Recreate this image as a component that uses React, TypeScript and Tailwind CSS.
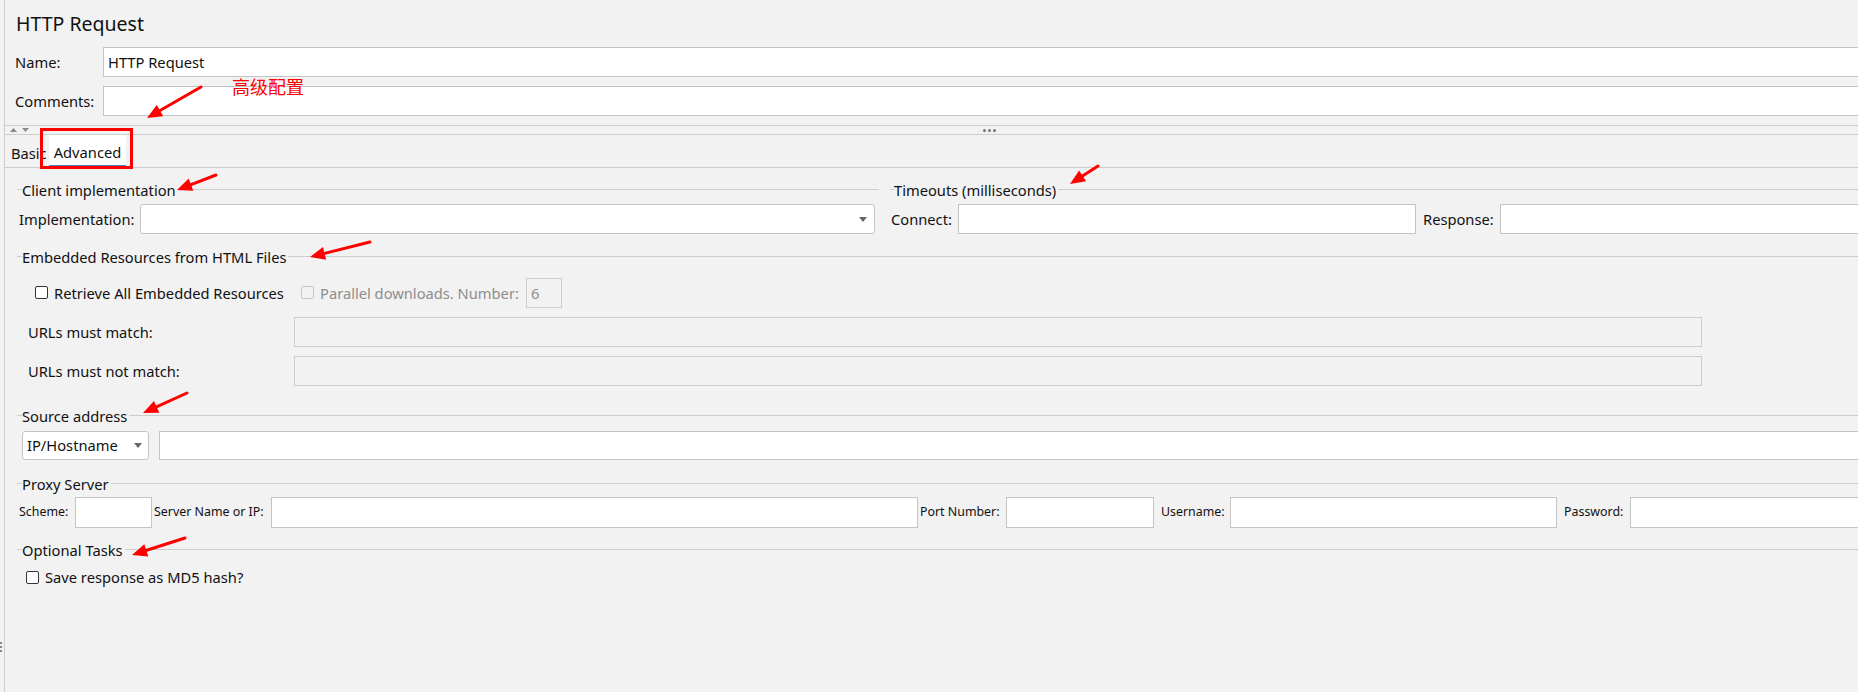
import React from 'react';

// JMeter "HTTP Request" sampler, Advanced tab, with red review annotations.

const LINE = 'bg-[#cdcdcd]';

const Header: React.FC<{ title: string; tick?: string }> = ({ title, tick = 'w-[5px]' }) => (
  <div className="flex items-center h-[20px]">
    <div className={`${tick} h-px ${LINE} shrink-0`} />
    <span className="pt-[2px] pr-[2px] leading-[20px] whitespace-nowrap">{title}</span>
    <div className={`flex-1 h-px ${LINE}`} />
  </div>
);

const Field: React.FC<{ className?: string; value?: string; disabled?: boolean }> = ({
  className = '',
  value,
  disabled,
}) => (
  <div
    className={`h-full border flex items-center pl-[4px] whitespace-nowrap ${
      disabled ? 'bg-[#f2f2f2] border-[#cccccc] text-[#8d8d8d]' : 'bg-white border-[#c4c4c4]'
    } ${className}`}
  >
    {value}
  </div>
);

const Caret: React.FC = () => (
  <svg width="8" height="5" viewBox="0 0 8 5">
    <path d="M0 0 H8 L4 5 Z" fill="#666" />
  </svg>
);

const Check: React.FC<{ disabled?: boolean }> = ({ disabled }) => (
  <span
    className={`w-[13px] h-[13px] shrink-0 border rounded-[2px] ${
      disabled ? 'border-[#c6c6c6] bg-[#f2f2f2]' : 'border-[#333333] bg-white'
    }`}
  />
);

const arrows: [number, number, number, number][] = [
  [201, 87, 147, 118],
  [216, 175, 177, 190],
  [1098, 166, 1070, 184],
  [370, 242, 310, 257],
  [187, 393, 143, 413],
  [185, 538, 132, 555],
];

const Arrow: React.FC<{ a: [number, number, number, number] }> = ({ a }) => {
  const [x1, y1, x2, y2] = a;
  const len = Math.hypot(x2 - x1, y2 - y1);
  const dx = (x2 - x1) / len;
  const dy = (y2 - y1) / len;
  const bx = x2 - dx * 15;
  const by = y2 - dy * 15;
  const px = -dy * 6.5;
  const py = dx * 6.5;
  return (
    <g>
      <line x1={x1} y1={y1} x2={bx + dx * 2} y2={by + dy * 2} stroke="#ff0000" strokeWidth="3" strokeLinecap="round" />
      <polygon points={`${x2},${y2} ${bx + px},${by + py} ${bx - px},${by - py}`} fill="#ff0000" />
    </g>
  );
};

export default function App() {
  return (
    <div className="relative w-[1858px] h-[692px] overflow-hidden bg-[#f2f2f2] text-[#111] text-[14.7px] font-['Noto_Sans',sans-serif]">
      <div className="pl-[4px] h-full">
        <div className="h-full w-[1870px] border-l border-[#cdcdcd]">
          {/* title */}
          <div className="h-[47px] pl-[11px] pt-[10px] text-[19.5px] leading-[28px]">HTTP Request</div>

          <div className="flex items-center h-[30px]">
            <span className="w-[98px] shrink-0 pl-[10px]">Name:</span>
            <Field className="flex-1" value="HTTP Request" />
          </div>
          <div className="flex items-center h-[30px] mt-[9px]">
            <span className="w-[98px] shrink-0 pl-[10px]">Comments:</span>
            <Field className="flex-1" />
          </div>

          {/* splitter */}
          <div className="mt-[9px] h-[10px] border-y border-[#cdcdcd] flex items-center">
            <svg className="ml-[5px]" width="19" height="4" viewBox="0 0 19 4">
              <path d="M0 4 L3.5 0 L7 4 Z" fill="#8a8a8a" />
              <path d="M12 0 H19 L15.5 4 Z" fill="#8a8a8a" />
            </svg>
            <div className="ml-[954px] flex gap-[2px]">
              <span className="w-[3px] h-[3px] rounded-full bg-[#777]" />
              <span className="w-[3px] h-[3px] rounded-full bg-[#777]" />
              <span className="w-[3px] h-[3px] rounded-full bg-[#777]" />
            </div>
          </div>

          {/* tabs */}
          <div className="flex h-[33px] border-b border-[#cdcdcd]">
            <div className="w-[44px] pl-[6px] pt-[5px] flex items-center">Basic</div>
            <div className="w-[77px] h-[32px] bg-white border-b-2 border-[#4a7fc1] pt-[5px] flex items-center justify-center">
              Advanced
            </div>
          </div>

          {/* advanced content */}
          <div className="pl-[12px]">
            <div className="flex mt-[11px]">
              <div className="w-[862px] shrink-0">
                <Header title="Client implementation" />
                <div className="flex items-center h-[30px] mt-[5px]">
                  <span className="w-[123px] shrink-0 pl-[2px]">Implementation:</span>
                  <div className="h-full w-[735px] bg-white border border-[#c4c4c4] rounded-[3px] flex items-center justify-end pr-[7px]">
                    <Caret />
                  </div>
                </div>
              </div>
              <div className="flex-1 ml-[11px]">
                <Header title="Timeouts (milliseconds)" tick="w-[4px]" />
                <div className="flex items-center h-[30px] mt-[5px]">
                  <span className="w-[68px] shrink-0 pl-[1px]">Connect:</span>
                  <Field className="w-[458px]" />
                  <span className="w-[84px] shrink-0 pl-[7px]">Response:</span>
                  <Field className="flex-1" />
                </div>
              </div>
            </div>

            <div className="mt-[12px]">
              <Header title="Embedded Resources from HTML Files" />
            </div>
            <div className="flex items-center h-[30px] mt-[12px]">
              <div className="ml-[18px] w-[266px] flex items-center gap-[6px]">
                <Check />
                <span className="whitespace-nowrap">Retrieve All Embedded Resources</span>
              </div>
              <div className="w-[225px] flex items-center gap-[6px] text-[#8d8d8d]">
                <Check disabled />
                <span className="whitespace-nowrap">Parallel downloads. Number:</span>
              </div>
              <Field className="w-[36px]" value="6" disabled />
            </div>
            <div className="flex items-center h-[30px] mt-[9px]">
              <span className="w-[277px] shrink-0 pl-[11px]">URLs must match:</span>
              <Field className="w-[1408px]" disabled />
            </div>
            <div className="flex items-center h-[30px] mt-[9px]">
              <span className="w-[277px] shrink-0 pl-[11px]">URLs must not match:</span>
              <Field className="w-[1408px]" disabled />
            </div>

            <div className="mt-[19px]">
              <Header title="Source address" />
            </div>
            <div className="flex items-center h-[29px] mt-[6px]">
              <div className="ml-[5px] h-full w-[127px] bg-white border border-[#c4c4c4] rounded-[3px] flex items-center justify-between pl-[4px] pr-[6px]">
                <span>IP/Hostname</span>
                <Caret />
              </div>
              <Field className="flex-1 ml-[10px]" />
            </div>

            <div className="mt-[13px]">
              <Header title="Proxy Server" />
            </div>
            <div className="flex items-center h-[31px] mt-[4px] text-[12.4px]">
              <span className="w-[58px] shrink-0 pl-[2px]">Scheme:</span>
              <Field className="w-[77px]" />
              <span className="w-[119px] shrink-0 pl-[2px] whitespace-nowrap">Server Name or IP:</span>
              <Field className="w-[647px]" />
              <span className="w-[88px] shrink-0 pl-[2px] whitespace-nowrap">Port Number:</span>
              <Field className="w-[148px]" />
              <span className="w-[76px] shrink-0 pl-[7px]">Username:</span>
              <Field className="w-[327px]" />
              <span className="w-[73px] shrink-0 pl-[7px]">Password:</span>
              <Field className="flex-1" />
            </div>

            <div className="mt-[11px]">
              <Header title="Optional Tasks" />
            </div>
            <div className="flex items-center h-[20px] mt-[8px]">
              <span className="ml-[9px]" />
              <Check />
              <span className="ml-[6px] whitespace-nowrap">Save response as MD5 hash?</span>
            </div>
          </div>
        </div>
      </div>

      {/* split pane grip */}
      <div className="absolute left-0 top-[642px] flex flex-col gap-[2px]">
        <span className="w-[2px] h-[2px] bg-[#888]" />
        <span className="w-[2px] h-[2px] bg-[#888]" />
        <span className="w-[2px] h-[2px] bg-[#888]" />
      </div>

      {/* annotations */}
      <div className="absolute left-[40px] top-[128px] w-[93px] h-[41px] border-[3px] border-[#ff0000]" />
      <div className="absolute left-[232px] top-[77px] text-[18px] leading-[18px] text-[#ff0000] font-['Noto_Sans_CJK_SC',sans-serif]">
        高级配置
      </div>
      <svg className="absolute inset-0 pointer-events-none" width="1858" height="692" viewBox="0 0 1858 692">
        {arrows.map((a, i) => (
          <Arrow key={i} a={a} />
        ))}
      </svg>
    </div>
  );
}
